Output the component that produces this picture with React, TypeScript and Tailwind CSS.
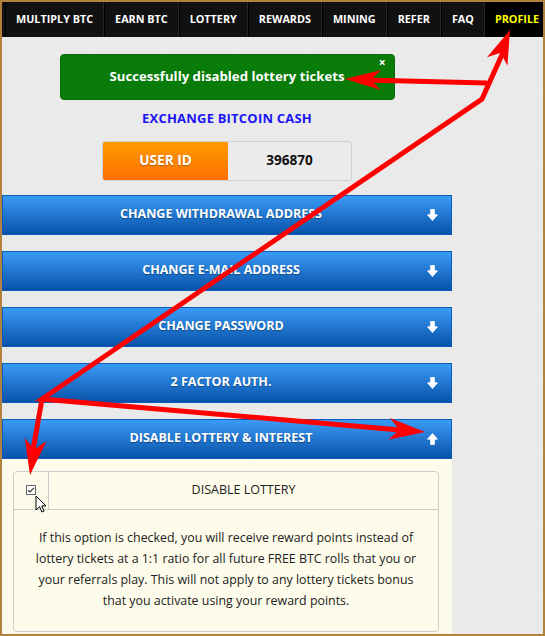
import React from 'react';

const NAV = ['MULTIPLY BTC', 'EARN BTC', 'LOTTERY', 'REWARDS', 'MINING', 'REFER', 'FAQ'];
const BARS = ['CHANGE WITHDRAWAL ADDRESS', 'CHANGE E-MAIL ADDRESS', 'CHANGE PASSWORD', '2 FACTOR AUTH.'];

function FatArrow({ up = false }: { up?: boolean }) {
  return (
    <svg width="11" height="12" viewBox="0 0 11 12" className={up ? 'rotate-180' : ''}>
      <path d="M3.6 0.5h3.8v5.3h3.1L5.5 11.5 0.5 5.8h3.1z" fill="#fff" strokeLinejoin="round" stroke="#fff" strokeWidth="0.8" />
    </svg>
  );
}

function Bar({ label, open = false }: { label: string; open?: boolean }) {
  return (
    <div className="relative h-[40px] flex items-center justify-center pr-[12px] border border-[#0b5cc0] bg-gradient-to-b from-[#3a9cf8] to-[#0752a8] text-white text-[12.5px] font-bold [text-shadow:0_1px_1px_rgba(0,0,0,0.35)]">
      {label}
      <span className="absolute right-[13px] top-[13px] flex">
        <FatArrow up={open} />
      </span>
    </div>
  );
}

// red annotation arrow head, computed from the line end and tip
function head(fx: number, fy: number, tx: number, ty: number, len = 34, half = 11) {
  const d = Math.hypot(tx - fx, ty - fy);
  const ux = (tx - fx) / d;
  const uy = (ty - fy) / d;
  const bx = tx - ux * len;
  const by = ty - uy * len;
  const nx = tx - ux * len * 0.72;
  const ny = ty - uy * len * 0.72;
  return `${tx},${ty} ${bx - uy * half},${by + ux * half} ${nx},${ny} ${bx + uy * half},${by - ux * half}`;
}

function Annotations() {
  const red = '#ff0000';
  return (
    <svg className="absolute top-0 left-0 pointer-events-none" width="545" height="636">
      <g stroke={red} strokeWidth="5" fill="none" strokeLinejoin="miter">
        <polyline points="505,48 482,99 42,399 400,430" />
        <line x1="42" y1="399" x2="33" y2="450" />
        <line x1="487" y1="83" x2="365" y2="80" />
      </g>
      <g fill={red}>
        <polygon points={head(482, 99, 510, 30, 34, 11)} />
        <polygon points={head(487, 83, 345, 79, 36, 10)} />
        <polygon points={head(42, 399, 425, 432, 36, 11)} />
        <polygon points={head(42, 399, 30, 475, 36, 11)} />
      </g>
    </svg>
  );
}

export default function App() {
  return (
    <div className="relative w-[545px] h-[636px] bg-[#b3813f] p-[2px] font-['Open_Sans',sans-serif] overflow-hidden">
      <div className="h-full flex flex-col bg-[#eaeaea] bg-[radial-gradient(circle,#dcdcdc_0.7px,transparent_0.9px)] bg-[length:9px_9px] overflow-hidden">
        {/* top nav */}
        <div className="h-[35px] shrink-0 flex bg-[#111] pl-[3px] text-[10.8px] font-bold text-white overflow-hidden">
          {NAV.map((n) => (
            <div key={n} className="flex items-center px-[10px] border-l border-l-[#000] border-r border-r-[#262626] whitespace-nowrap">
              {n}
            </div>
          ))}
          <div className="flex-1 flex items-center pl-[9px] bg-black border-l border-[#000] text-[#ffff00] whitespace-nowrap">
            PROFILE
          </div>
        </div>

        <div className="flex">
          {/* main column */}
          <div className="w-[450px] shrink-0 flex flex-col">
            <div className="relative w-[335px] h-[46px] mx-auto mt-[17px] rounded-[4px] bg-[#087b08] border border-[#066c06] flex items-center justify-center text-white text-[13.2px] font-bold">
              Successfully disabled lottery tickets
              <span className="absolute right-[8px] top-[2px] text-[12px] leading-none">×</span>
            </div>

            <div className="mt-[9px] text-center text-[13px] tracking-[0.2px] font-bold text-[#1b14f5]">EXCHANGE BITCOIN CASH</div>

            <div className="mt-[12px] mx-auto w-[250px] h-[40px] flex rounded-[3px] overflow-hidden border border-[#cfcfcf] text-[13.6px] font-bold">
              <div className="w-[125px] flex items-center justify-center bg-gradient-to-b from-[#ff9a00] to-[#ff6e00] text-white [text-shadow:0_1px_1px_rgba(0,0,0,0.3)]">
                USER ID
              </div>
              <div className="flex-1 flex items-center justify-center bg-[#ebebeb] text-[#111]">396870</div>
            </div>

            <div className="mt-[14px] flex flex-col gap-[16px]">
              {BARS.map((b) => (
                <Bar key={b} label={b} />
              ))}
              <div>
                <Bar label="DISABLE LOTTERY & INTEREST" open />
                <div className="bg-[#fdfbea] pt-[12px] pb-[8px] px-[11px]">
                  <div className="mr-[2px] rounded-[4px] border border-[#cccccc] text-[#222]">
                    <div className="flex h-[38px] border-b border-[#cccccc]">
                      <div className="relative w-[35px] border-r border-[#cccccc] flex items-center justify-center">
                        <span className="w-[10px] h-[10px] border border-[#666] bg-white flex items-center justify-center">
                          <svg width="8" height="8" viewBox="0 0 8 8">
                            <path d="M1 4.2 3 6 7 1.8" fill="none" stroke="#333" strokeWidth="1.2" />
                          </svg>
                        </span>
                        <svg className="absolute left-[21px] top-[23px]" width="12" height="18" viewBox="0 0 12 18">
                          <path d="M1 1v14l3.5-3.3 2.4 5.3 2.2-1-2.4-5.1H11z" fill="#fff" stroke="#000" strokeWidth="1" strokeLinejoin="round" />
                        </svg>
                      </div>
                      <div className="flex-1 flex items-center justify-center text-[12.5px]">DISABLE LOTTERY</div>
                    </div>
                    <p className="px-[16px] pt-[17px] pb-[20px] text-center text-[12.4px] leading-[21px]">
                      If this option is checked, you will receive reward points instead of lottery tickets at a 1:1 ratio for
                      all future FREE BTC rolls that you or your referrals play. This will not apply to any lottery tickets
                      bonus that you activate using your reward points.
                    </p>
                  </div>
                </div>
              </div>
            </div>
          </div>
        </div>
      </div>
      <Annotations />
    </div>
  );
}
